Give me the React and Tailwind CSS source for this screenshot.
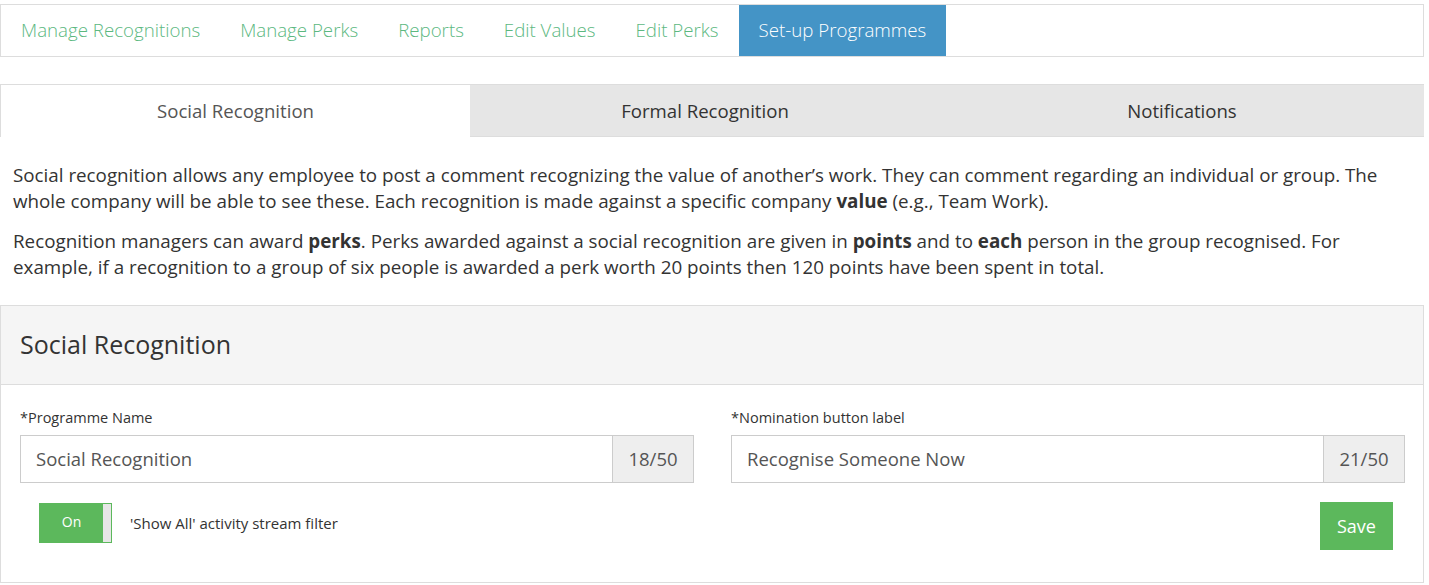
const font = { fontFamily: '"Open Sans", "Liberation Sans", sans-serif' }

const navItems = ['Manage Recognitions', 'Manage Perks', 'Reports', 'Edit Values', 'Edit Perks', 'Set-up Programmes']
const tabs = ['Social Recognition', 'Formal Recognition', 'Notifications']

function CountedInput({ label, value, count }) {
  return (
    <div>
      <label className="block text-[14.5px] text-[#333] mb-[7px] leading-[20px]">{label}</label>
      <div className="flex h-[48px] border border-[#ccc]">
        <div className="flex-1 flex items-center pl-[15px] text-[18.5px] text-[#555]">{value}</div>
        <div className="w-[81px] flex items-center justify-center bg-[#eee] border-l border-[#ccc] text-[18.5px] text-[#555]">{count}</div>
      </div>
    </div>
  )
}

export default function App() {
  return (
    <div className="w-[1429px] h-[585px] bg-white overflow-hidden pt-[4px] pr-[5px]" style={font}>
      <nav className="flex h-[53px] border border-[#ddd]">
        {navItems.map((item, i) => (
          <a
            key={item}
            className={`flex items-center px-[20px] text-[18.7px] font-light ${i === navItems.length - 1 ? 'bg-[#4494c6] text-white' : 'text-[#5cb87f]'}`}
          >
            {item}
          </a>
        ))}
      </nav>

      <div className="mt-[27px] flex h-[53px] border-t border-[#ddd]">
        {tabs.map((t, i) => (
          <div
            key={t}
            className={`flex items-center justify-center text-[18.6px] ${i === 2 ? 'flex-1' : 'w-[470px]'} ${i === 0 ? 'bg-white text-[#555] border-l border-[#ddd]' : 'bg-[#e6e6e6] text-[#333] border-b border-[#ddd]'}`}
          >
            {t}
          </div>
        ))}
      </div>

      <div className="px-[13px] pt-[25px] text-[18.8px] leading-[26px] text-[#333]">
        <p>
          Social recognition allows any employee to post a comment recognizing the value of another’s work. They can comment regarding an individual or group. The whole company will be able to see these. Each recognition is made against a specific company <b>value</b> (e.g., Team Work).
        </p>
        <p className="mt-[14px]">
          Recognition managers can award <b>perks</b>. Perks awarded against a social recognition are given in <b>points</b> and to <b>each</b> person in the group recognised. For example, if a recognition to a group of six people is awarded a perk worth 20 points then 120 points have been spent in total.
        </p>
      </div>

      <div className="mt-[25px] border border-[#ddd]">
        <div className="h-[79px] bg-[#f5f5f5] border-b border-[#ddd] flex items-center px-[19px]">
          <h2 className="text-[25px] text-[#333]">Social Recognition</h2>
        </div>
        <div className="pt-[23px] pl-[19px] pr-[18px] pb-[32px]">
          <div className="grid grid-cols-2 gap-[37px]">
            <CountedInput label="*Programme Name" value="Social Recognition" count="18/50" />
            <CountedInput label="*Nomination button label" value="Recognise Someone Now" count="21/50" />
          </div>
          <div className="flex items-start justify-between mt-[19px]">
            <div className="flex items-center ml-[19px] mt-[1px]">
              <div className="flex h-[40px] w-[73px] border border-[#5cb85c]">
                <div className="flex-1 bg-[#5cb85c] text-white text-[14px] flex items-start justify-center pt-[7px]">On</div>
                <div className="w-[8px] bg-[#e6e6e6]"></div>
              </div>
              <span className="ml-[18px] text-[15px] text-[#333]">'Show All' activity stream filter</span>
            </div>
            <button className="mr-[12px] h-[48px] w-[73px] bg-[#5cb85c] text-white text-[18px]">Save</button>
          </div>
        </div>
      </div>
    </div>
  )
}
